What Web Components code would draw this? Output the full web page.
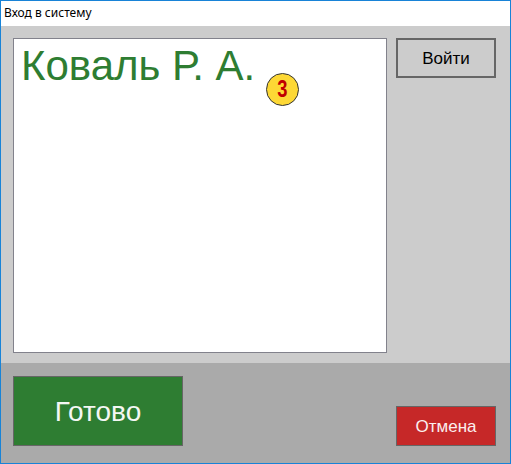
<!DOCTYPE html>
<html lang="ru"><head><meta charset="utf-8"><style>
html,body{margin:0;padding:0;height:100%;overflow:hidden;background:#ccc}
</style></head><body>
<login-window heading="Вход в систему">
  <name-list slot="main" name="Коваль Р. А." count="3"></name-list>
  <action-button slot="side" kind="plain" style="width:100px;height:40px">Войти</action-button>
  <action-button slot="left" kind="ok" style="width:170px;height:70px">Готово</action-button>
  <action-button slot="right" kind="cancel" style="width:100px;height:40px">Отмена</action-button>
</login-window>
<script>
function def(name, html){
  customElements.define(name, class extends HTMLElement{
    connectedCallback(){
      if(this.shadowRoot) return;
      const r=this.attachShadow({mode:'open'});
      r.innerHTML=html(this);
    }
  });
}
def('login-window', el=>`<style>
:host{display:flex;flex-direction:column;box-sizing:border-box;width:511px;height:464px;border:1px solid #1883d7;font-family:"Liberation Sans",Arial,sans-serif}
.title{height:25px;flex:none;background:#fff;display:flex;align-items:center;padding-left:3px;font:12px "Noto Sans","Open Sans",sans-serif;color:#000;box-sizing:border-box;padding-bottom:2px}
.body{height:337px;flex:none;background:#ccc;box-sizing:border-box;padding:12px 14px 10px 12px;display:flex;gap:9px;align-items:flex-start}
.foot{flex:1;background:#aaa;box-sizing:border-box;padding:13px 14px 17px 12px;display:flex;justify-content:space-between;align-items:flex-end}
</style>
<div class="title">${el.getAttribute('heading')}</div>
<div class="body"><slot name="main"></slot><slot name="side"></slot></div>
<div class="foot"><slot name="left"></slot><slot name="right"></slot></div>`);
def('name-list', el=>`<style>
:host{display:block;position:relative;box-sizing:border-box;width:374px;height:315px;background:#fff;border:1px solid #82828c}
.name{font:42px/1 "Liberation Sans",Arial,sans-serif;color:#2e7d32;padding:6px 0 0 7px;white-space:nowrap}
.badge{position:absolute;left:252px;top:34px;width:33px;height:33px;box-sizing:border-box;border-radius:50%;background:#fdd835;border:1px solid #333;color:#c00000;font:bold 23px/31px "Liberation Sans",sans-serif;text-align:center}
.badge span{display:inline-block;transform:scaleX(.8)}
</style><div class="name">${el.getAttribute('name')}</div><div class="badge"><span>${el.getAttribute('count')}</span></div>`);
def('action-button', el=>{
  const k=el.getAttribute('kind');
  const s={plain:'background:#ccc;color:#000;border:2px solid #666;font-size:17px;padding-top:2px',
    ok:'background:#2e7d32;color:#f4f7f4;border:1px solid #666;font-size:28px;padding-top:1px',
    cancel:'background:#c62828;color:#fbeeee;border:1px solid #666;font-size:17px;padding-top:2px'}[k];
  return `<style>:host{display:block;flex:none}
.b{box-sizing:border-box;width:100%;height:100%;display:flex;align-items:center;justify-content:center;font-family:"Liberation Sans",Arial,sans-serif;${s}}
</style><div class="b"><slot></slot></div>`;
});
</script>
</body></html>
